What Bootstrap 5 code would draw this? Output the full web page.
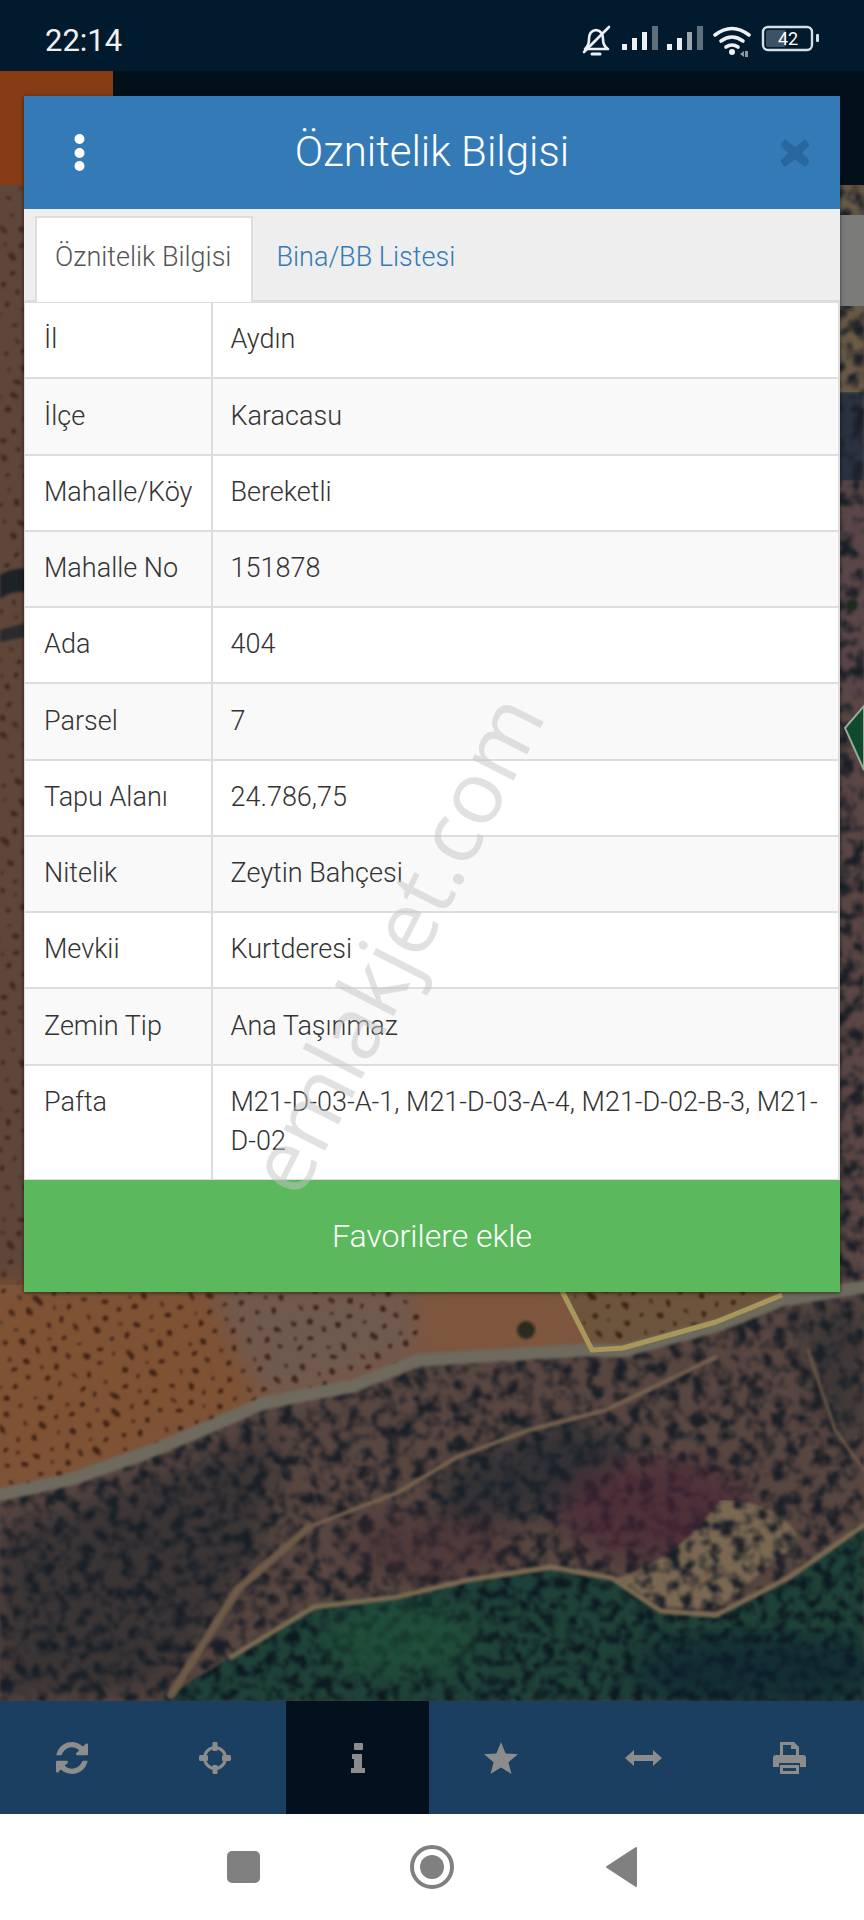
<!DOCTYPE html>
<html lang="tr">
<head>
  <meta charset="UTF-8" />
  <meta name="viewport" content="width=device-width, initial-scale=1" />
  <title>Öznitelik Bilgisi</title>
  <link href="https://cdn.jsdelivr.net/npm/bootstrap@5.3.3/dist/css/bootstrap.min.css" rel="stylesheet" />
  <style>
    body { font-family: Roboto, "Liberation Sans", sans-serif; background: #fff; }
    .phone { width: 864px; height: 1920px; overflow: hidden; position: relative; }

    .status-row { height: 71px; background: #021a2e; color: #eef1f3; padding: 0 45px; }
    .status-time { font-size: 31px; line-height: 1; margin-top: 10px; }
    .status-icons { margin-top: 12px; }
    .batt-num { font-size: 18px; fill: #fff; font-family: Roboto, sans-serif; }

    .map-area { height: 1630px; position: relative; }
    .map-svg { position: absolute; left: 0; top: 0; }

    .info-box { position: relative; margin: 25px 24px 0; box-shadow: 0 1px 4px rgba(0,0,0,.55); }
    .info-head { height: 113px; background: #337ab7; color: #fff; }
    .info-title { font-size: 42px; font-weight: 300; line-height: 1; flex: 1; text-align: center; margin-top: -1px; }
    .head-side { width: 110px; }
    .close-x { color: #28689f; margin-left: 20px; }

    .tab-strip { background: #eee; padding: 7px 0 0 11px; height: 93px; border-bottom: 2px solid #ddd; --bs-nav-tabs-border-width: 0; }
    .tab-strip .nav-link { font-size: 27px; font-weight: 300; line-height: 39px; padding: 22px 19px 22px; border-radius: 0; color: #337ab7; margin: 0; }
    .tab-strip .nav-link.active { background: #fff; color: #555; border: 2px solid #ddd; border-bottom: 0; padding: 20px 20px 24px 18px; height: 86px; margin-bottom: -2px; }
    .tab-strip .nav-link.plain { padding-left: 23px; }

    .attr-table { font-size: 27px; font-weight: 300; line-height: 39px; color: #333; --bs-table-border-color: #ddd; table-layout: fixed; background: #fff; }
    .attr-table td { padding: 17.25px 18px 18px 18px; border-top: 0; border-width: 0 2px 2px 0; background: #fff; }
    .attr-table td:first-child { width: 187px; padding-left: 19px; border-left: 1px solid #ddd; }
    .attr-table tr:nth-child(even) td { background: #f9f9f9; }
    .attr-table tr:last-child td { border-bottom: 0; padding-bottom: 18px; }

    .fav-btn { display: block; width: 100%; height: 112px; background: #5cb85c; color: #fff; font-size: 32px; font-weight: 300; border: 0; border-radius: 0; padding: 0; }

    .tool-row { height: 113px; background: #1a3f60; }
    .tool-cell { width: 143px; }
    .tool-cell.on { background: #02111d; }
    .tool-cell svg { fill: #8c8c8c; }

    .sys-row { height: 106px; background: #fff; }

    .stamp { position: absolute; left: 436px; top: 858px; width: 700px; text-align: center; margin-left: -350px; margin-top: -70px; font-family: "Open Sans", sans-serif; font-size: 87px; font-weight: 400; line-height: 140px; color: rgba(195,195,195,.5); transform: rotate(-63deg) translateX(-95px); transform-origin: center; pointer-events: none; white-space: nowrap; }
  </style>
</head>
<body>
<div class="phone d-flex flex-column">

  <!-- Status bar -->
  <div class="status-row d-flex justify-content-between align-items-center">
    <span class="status-time">22:14</span>
    <svg class="status-icons" width="239" height="34" viewBox="0 0 239 34">
      <!-- muted bell -->
      <g fill="none" stroke="#eef1f3" stroke-width="2.6" stroke-linecap="round" stroke-linejoin="round">
        <path d="M5 24 q4 -3 4 -10 q0 -8 7 -9 q7 1 7 9 q0 7 5 10 z" />
        <path d="M29 2 L4 27" />
        <path d="M12 29 h8" stroke-width="3" />
      </g>
      <!-- signal -->
      <g fill="#eef1f3">
        <rect x="42" y="19" width="5" height="6" /><rect x="52" y="13" width="5" height="12" /><rect x="62" y="7" width="5" height="18" />
        <rect x="72" y="1" width="6" height="24" fill="#5f6f7c" />
        <rect x="87" y="19" width="5" height="6" /><rect x="97" y="13" width="5" height="12" /><rect x="107" y="7" width="5" height="18" fill="#9aa5ad" />
        <rect x="117" y="1" width="6" height="24" fill="#5f6f7c" />
      </g>
      <!-- wifi -->
      <g fill="none" stroke="#eef1f3" stroke-width="3.6" stroke-linecap="round">
        <path d="M135 10 q17 -13 34 0" />
        <path d="M141 16 q11 -8 22 0" />
        <path d="M146 22 q6 -4 12 0" />
      </g>
      <circle cx="152" cy="27" r="3" fill="#eef1f3" />
      <path d="M160 29 l4 -3 v6 z M165 26 h3 v6 h-3 z" fill="#8b97a1" />
      <!-- battery -->
      <rect x="183" y="2" width="49" height="23" rx="5" fill="none" stroke="#d5dfe6" stroke-width="2.4" />
      <rect x="186" y="5" width="20" height="17" rx="2" fill="#3d5266" />
      <rect x="236" y="9" width="3" height="8" rx="1" fill="#d5dfe6" />
      <text class="batt-num" x="208" y="20" text-anchor="middle">42</text>
    </svg>
  </div>

  <!-- Map with the attribute dialog on it -->
  <div class="map-area">
    <svg class="map-svg" width="864" height="1630" viewBox="0 71 864 1630" color-interpolation-filters="sRGB">
      <defs>
        <filter id="blotch" x="0" y="0" width="100%" height="100%">
          <feTurbulence type="fractalNoise" baseFrequency=".075" numOctaves="5" seed="8" result="n" />
          <feColorMatrix in="n" type="matrix" values="0 0 0 0 .1  0 0 0 0 .12  0 0 0 0 .15  0 3.6 0 0 -1.55" result="c" />
          <feComposite in="c" in2="SourceAlpha" operator="in" result="d" />
          <feMerge result="m"><feMergeNode in="SourceGraphic" /><feMergeNode in="d" /></feMerge>
          <feGaussianBlur in="m" stdDeviation="1.6" />
        </filter>
        <filter id="forest" x="0" y="0" width="100%" height="100%">
          <feTurbulence type="fractalNoise" baseFrequency=".09" numOctaves="5" seed="4" result="n" />
          <feColorMatrix in="n" type="matrix" values="0 0 0 0 .05  0 0 0 0 .1  0 0 0 0 .13  0 3.6 0 0 -1.55" result="c" />
          <feComposite in="c" in2="SourceAlpha" operator="in" result="d" />
          <feMerge result="m"><feMergeNode in="SourceGraphic" /><feMergeNode in="d" /></feMerge>
          <feGaussianBlur in="m" stdDeviation="1.4" />
        </filter>
        <filter id="jitter" x="0" y="0" width="100%" height="100%">
          <feTurbulence type="fractalNoise" baseFrequency=".035" numOctaves="2" seed="3" result="n" />
          <feDisplacementMap in="SourceGraphic" in2="n" scale="14" />
          <feGaussianBlur stdDeviation="1" />
        </filter>
        <filter id="soft"><feGaussianBlur stdDeviation="1.6" /></filter>
        <filter id="softer"><feGaussianBlur stdDeviation="14" /></filter>
        <pattern id="trees" width="34" height="30" patternUnits="userSpaceOnUse" patternTransform="rotate(14)">
          <circle cx="6" cy="6" r="3" fill="#3a1c10" />
          <circle cx="23" cy="11" r="2.4" fill="#3f2216" />
          <circle cx="12" cy="23" r="2.8" fill="#3a1c10" />
          <circle cx="30" cy="26" r="2" fill="#46281a" />
        </pattern>
      </defs>

      <!-- base ground -->
      <rect x="0" y="71" width="864" height="1630" fill="#5f4a40" />
      <rect x="0" y="185" width="30" height="1110" fill="#5f463a" />
      <rect x="0" y="185" width="30" height="1110" fill="url(#trees)" filter="url(#jitter)" opacity=".7" />
      <path d="M0 575 q14 -8 30 -6 v24 q-16 -4 -30 6 z" fill="#1d2227" filter="url(#soft)" />
      <path d="M0 630 l30 -8 v14 l-30 6 z" fill="#2b2a2c" filter="url(#soft)" />

      <!-- right strip -->
      <rect x="836" y="185" width="28" height="230" fill="#6a5b46" filter="url(#blotch)" />
      <rect x="836" y="392" width="28" height="100" fill="#2a3240" filter="url(#blotch)" />
      <rect x="836" y="480" width="28" height="230" fill="#5a4648" filter="url(#blotch)" />
      <circle cx="852" cy="605" r="6" fill="#1f2a1e" filter="url(#soft)" />
      <rect x="836" y="700" width="28" height="600" fill="#5a4644" filter="url(#blotch)" />
      <path d="M845 728 L864 706 V770 Z" fill="#0f4a2c" stroke="#9aa89a" stroke-width="2" />
      <rect x="840" y="215" width="24" height="91" fill="#7b7b79" />

      <!-- top band and orange tile -->
      <rect x="0" y="71" width="864" height="114" fill="#02101c" />
      <rect x="0" y="71" width="113" height="114" fill="#873c16" />

      <!-- orchard above the road -->
      <path d="M0 1285 H864 V1291 L782 1297 L716 1323 L623 1348 L584 1347 L419 1357 L353 1383 L264 1400 L204 1427 L149 1450 L72 1477 L0 1493 Z" fill="#7c5640" />
      <path d="M-20 1285 H230 L265 1400 L204 1427 L72 1477 L-20 1493 Z" fill="#7f5234" filter="url(#softer)" />
      <path d="M210 1285 H410 L420 1355 L300 1395 L262 1398 Z" fill="#6f5a50" filter="url(#softer)" />
      <path d="M420 1295 H555 L585 1340 L430 1350 Z" fill="#80573e" filter="url(#softer)" />
      <path d="M562 1285 H790 L716 1322 L623 1348 L592 1350 Z" fill="#6d553d" />
      <path d="M0 1285 H420 V1355 L353 1383 L264 1400 L204 1427 L149 1450 L72 1477 L0 1493 Z" fill="url(#trees)" filter="url(#jitter)" opacity=".85" />
      <path d="M570 1285 H780 L716 1318 L623 1342 L595 1345 Z" fill="url(#trees)" filter="url(#jitter)" opacity=".85" />
      <circle cx="526" cy="1330" r="9" fill="#2a2a20" filter="url(#soft)" />

      <!-- scrub below the road -->
      <path d="M0 1493 L72 1477 L149 1450 L204 1427 L264 1400 L353 1383 L419 1357 L584 1347 L623 1348 L716 1323 L782 1297 L864 1285 V1701 H0 Z" fill="#584640" filter="url(#blotch)" />
      <path d="M0 1530 L150 1480 L280 1430 L260 1560 L160 1690 L0 1700 Z" fill="#182029" opacity=".45" filter="url(#softer)" />
      <path d="M440 1470 L560 1420 L640 1440 L560 1510 L440 1530 Z" fill="#15222c" opacity=".55" filter="url(#softer)" />
      <ellipse cx="655" cy="1510" rx="95" ry="50" fill="#4a2336" opacity=".6" filter="url(#softer)" />
      <ellipse cx="430" cy="1545" rx="80" ry="34" fill="#4a2f36" opacity=".5" filter="url(#softer)" />
      <path d="M800 1320 L864 1300 V1440 L820 1420 Z" fill="#1d252c" opacity=".45" filter="url(#softer)" />
      <path d="M612 1580 Q680 1560 720 1500 Q780 1500 800 1540 L716 1610 L661 1606 Z" fill="#7a6852" filter="url(#blotch)" />

      <!-- forest -->
      <path d="M160 1701 L231 1657 L314 1607 L397 1597 L468 1580 L551 1570 L612 1580 L661 1613 L716 1617 L788 1580 L864 1527 V1701 Z" fill="#1e4238" filter="url(#forest)" />
      <ellipse cx="400" cy="1640" rx="80" ry="36" fill="#235a3c" opacity=".55" filter="url(#softer)" />
      <ellipse cx="760" cy="1670" rx="130" ry="35" fill="#0c2030" opacity=".6" filter="url(#softer)" />

      <!-- roads and tracks -->
      <g fill="none" stroke-linecap="round" stroke-linejoin="round" filter="url(#soft)">
        <path d="M0 1495 L72 1479 L149 1452 L204 1429 L264 1403 L353 1386 L419 1360 L584 1350 L623 1351 L716 1326 L782 1300 L864 1287" stroke="#6f6a5e" stroke-width="13" />
        <path d="M309 1527 L397 1493 L457 1457 L529 1430 L606 1410 L716 1357" stroke="#77634e" stroke-width="4" />
        <path d="M171 1695 L237 1590 L309 1527" stroke="#6e5a48" stroke-width="8" />
        <path d="M231 1657 L314 1607 L397 1597 L468 1580 L551 1567 L612 1578 L661 1611 L716 1615 L788 1578 L864 1525" stroke="#7c6b52" stroke-width="5" />
        <path d="M808 1350 L835 1430 L864 1470" stroke="#6b5a48" stroke-width="3" />
      </g>

      <!-- parcel boundary -->
      <path d="M562 1291 L592 1350 L623 1348 L716 1322 L782 1295" fill="none" stroke="#a8975a" stroke-width="5" stroke-linejoin="round" />
    </svg>

    <div class="info-box">
      <div class="info-head d-flex align-items-center">
        <div class="head-side d-flex justify-content-center">
          <svg width="11" height="40" viewBox="0 0 11 40">
            <circle cx="5.5" cy="6" r="5" fill="#fff" /><circle cx="5.5" cy="20" r="5" fill="#fff" /><circle cx="5.5" cy="33" r="5" fill="#fff" />
          </svg>
        </div>
        <div class="info-title">Öznitelik Bilgisi</div>
        <div class="head-side d-flex justify-content-center">
          <svg class="close-x" width="28" height="28" viewBox="0 0 28 28" fill="currentColor">
            <path d="M4 1 L14 9 L24 1 L28 6 L20 14 L28 22 L24 27 L14 20 L4 27 L0 22 L8 14 L0 6 Z" stroke="currentColor" stroke-linejoin="round" stroke-width="1.5" />
          </svg>
        </div>
      </div>

      <ul class="nav nav-tabs tab-strip">
        <li class="nav-item"><a class="nav-link active" href="#">Öznitelik Bilgisi</a></li>
        <li class="nav-item"><a class="nav-link plain" href="#">Bina/BB Listesi</a></li>
      </ul>

      <table class="table table-bordered attr-table mb-0">
        <tbody>
          <tr><td>İl</td><td>Aydın</td></tr>
          <tr><td>İlçe</td><td>Karacasu</td></tr>
          <tr><td>Mahalle/Köy</td><td>Bereketli</td></tr>
          <tr><td>Mahalle No</td><td>151878</td></tr>
          <tr><td>Ada</td><td>404</td></tr>
          <tr><td>Parsel</td><td>7</td></tr>
          <tr><td>Tapu Alanı</td><td>24.786,75</td></tr>
          <tr><td>Nitelik</td><td>Zeytin Bahçesi</td></tr>
          <tr><td>Mevkii</td><td>Kurtderesi</td></tr>
          <tr><td>Zemin Tip</td><td>Ana Taşınmaz</td></tr>
          <tr><td>Pafta</td><td>M21-D-03-A-1, M21-D-03-A-4, M21-D-02-B-3, M21-D-02</td></tr>
        </tbody>
      </table>

      <button class="btn fav-btn" type="button">Favorilere ekle</button>
    </div>
  </div>

  <!-- Bottom toolbar -->
  <div class="tool-row d-flex">
    <div class="tool-cell d-flex align-items-center justify-content-center">
      <svg width="32" height="32" viewBox="128 128 1536 1536"><path d="M1639 1056q0 5-1 7-64 268-268 434.5t-478 166.5q-146 0-282.5-55t-243.5-157l-129 129q-19 19-45 19t-45-19-19-45v-448q0-26 19-45t45-19h448q26 0 45 19t19 45-19 45l-137 137q71 66 161 102t187 36q134 0 250-65t186-179q11-17 53-117 8-23 30-23h192q13 0 22.5 9.5t9.5 22.5zm25-800v448q0 26-19 45t-45 19h-448q-26 0-45-19t-19-45 19-45l138-138q-148-137-349-137-134 0-250 65t-186 179q-11 17-53 117-8 23-30 23h-199q-13 0-22.5-9.5t-9.5-22.5v-7q65-268 270-434.5t480-166.5q146 0 284 55.5t245 156.5l130-129q19-19 45-19t45 19 19 45z" /></svg>
    </div>
    <div class="tool-cell d-flex align-items-center justify-content-center">
      <svg width="32" height="32" viewBox="0 0 32 32">
        <circle cx="16" cy="16" r="10.5" fill="none" stroke="#8c8c8c" stroke-width="3" />
        <rect x="13.5" y="0" width="5" height="9" rx="1" /><rect x="13.5" y="23" width="5" height="9" rx="1" />
        <rect x="0" y="13" width="9" height="6" rx="1.5" /><rect x="23" y="13" width="9" height="6" rx="1.5" />
      </svg>
    </div>
    <div class="tool-cell on d-flex align-items-center justify-content-center">
      <svg width="14" height="30" viewBox="0 0 14 30">
        <rect x="3" y="0" width="9" height="7" rx="1" />
        <path d="M1 11 h10 v14 h3 v5 H0 v-5 h3 v-9 H1 z" />
      </svg>
    </div>
    <div class="tool-cell d-flex align-items-center justify-content-center">
      <svg width="34" height="32" viewBox="0 0 34 32"><path d="M17 0 L21.6 11.4 L34 12.3 L24.4 20.2 L27.5 32 L17 25.6 L6.5 32 L9.6 20.2 L0 12.3 L12.4 11.4 Z" /></svg>
    </div>
    <div class="tool-cell d-flex align-items-center justify-content-center">
      <svg width="37" height="16" viewBox="0 0 37 16"><path d="M0 8 L9 0 V5 H28 V0 L37 8 L28 16 V11 H9 V16 Z" /></svg>
    </div>
    <div class="tool-cell d-flex align-items-center justify-content-center flex-grow-1">
      <svg width="33" height="32" viewBox="0 0 33 32">
        <path d="M7 0 H21 L26 5 V13 H23 V7 H18 V3 H10 V13 H7 Z" />
        <path d="M3 13 H30 a3 3 0 0 1 3 3 V25 H27 V21 H6 V25 H0 V16 a3 3 0 0 1 3 -3 Z" />
        <path d="M7 23 H26 V32 H7 Z M10 26 V29 H23 V26 Z" fill-rule="evenodd" />
      </svg>
    </div>
  </div>

  <!-- Android nav -->
  <div class="sys-row d-flex align-items-center justify-content-center">
    <svg width="410" height="46" viewBox="0 0 410 46">
      <rect x="0" y="7" width="33" height="32" rx="5" fill="#808080" />
      <circle cx="205" cy="23" r="20" fill="none" stroke="#808080" stroke-width="4" />
      <circle cx="205" cy="23" r="12" fill="#808080" />
      <path d="M409 4 V42 L380 23 Z" fill="#808080" stroke="#808080" stroke-width="2" stroke-linejoin="round" />
    </svg>
  </div>

  <div class="stamp">emlakjet.com</div>
</div>
</body>
</html>
